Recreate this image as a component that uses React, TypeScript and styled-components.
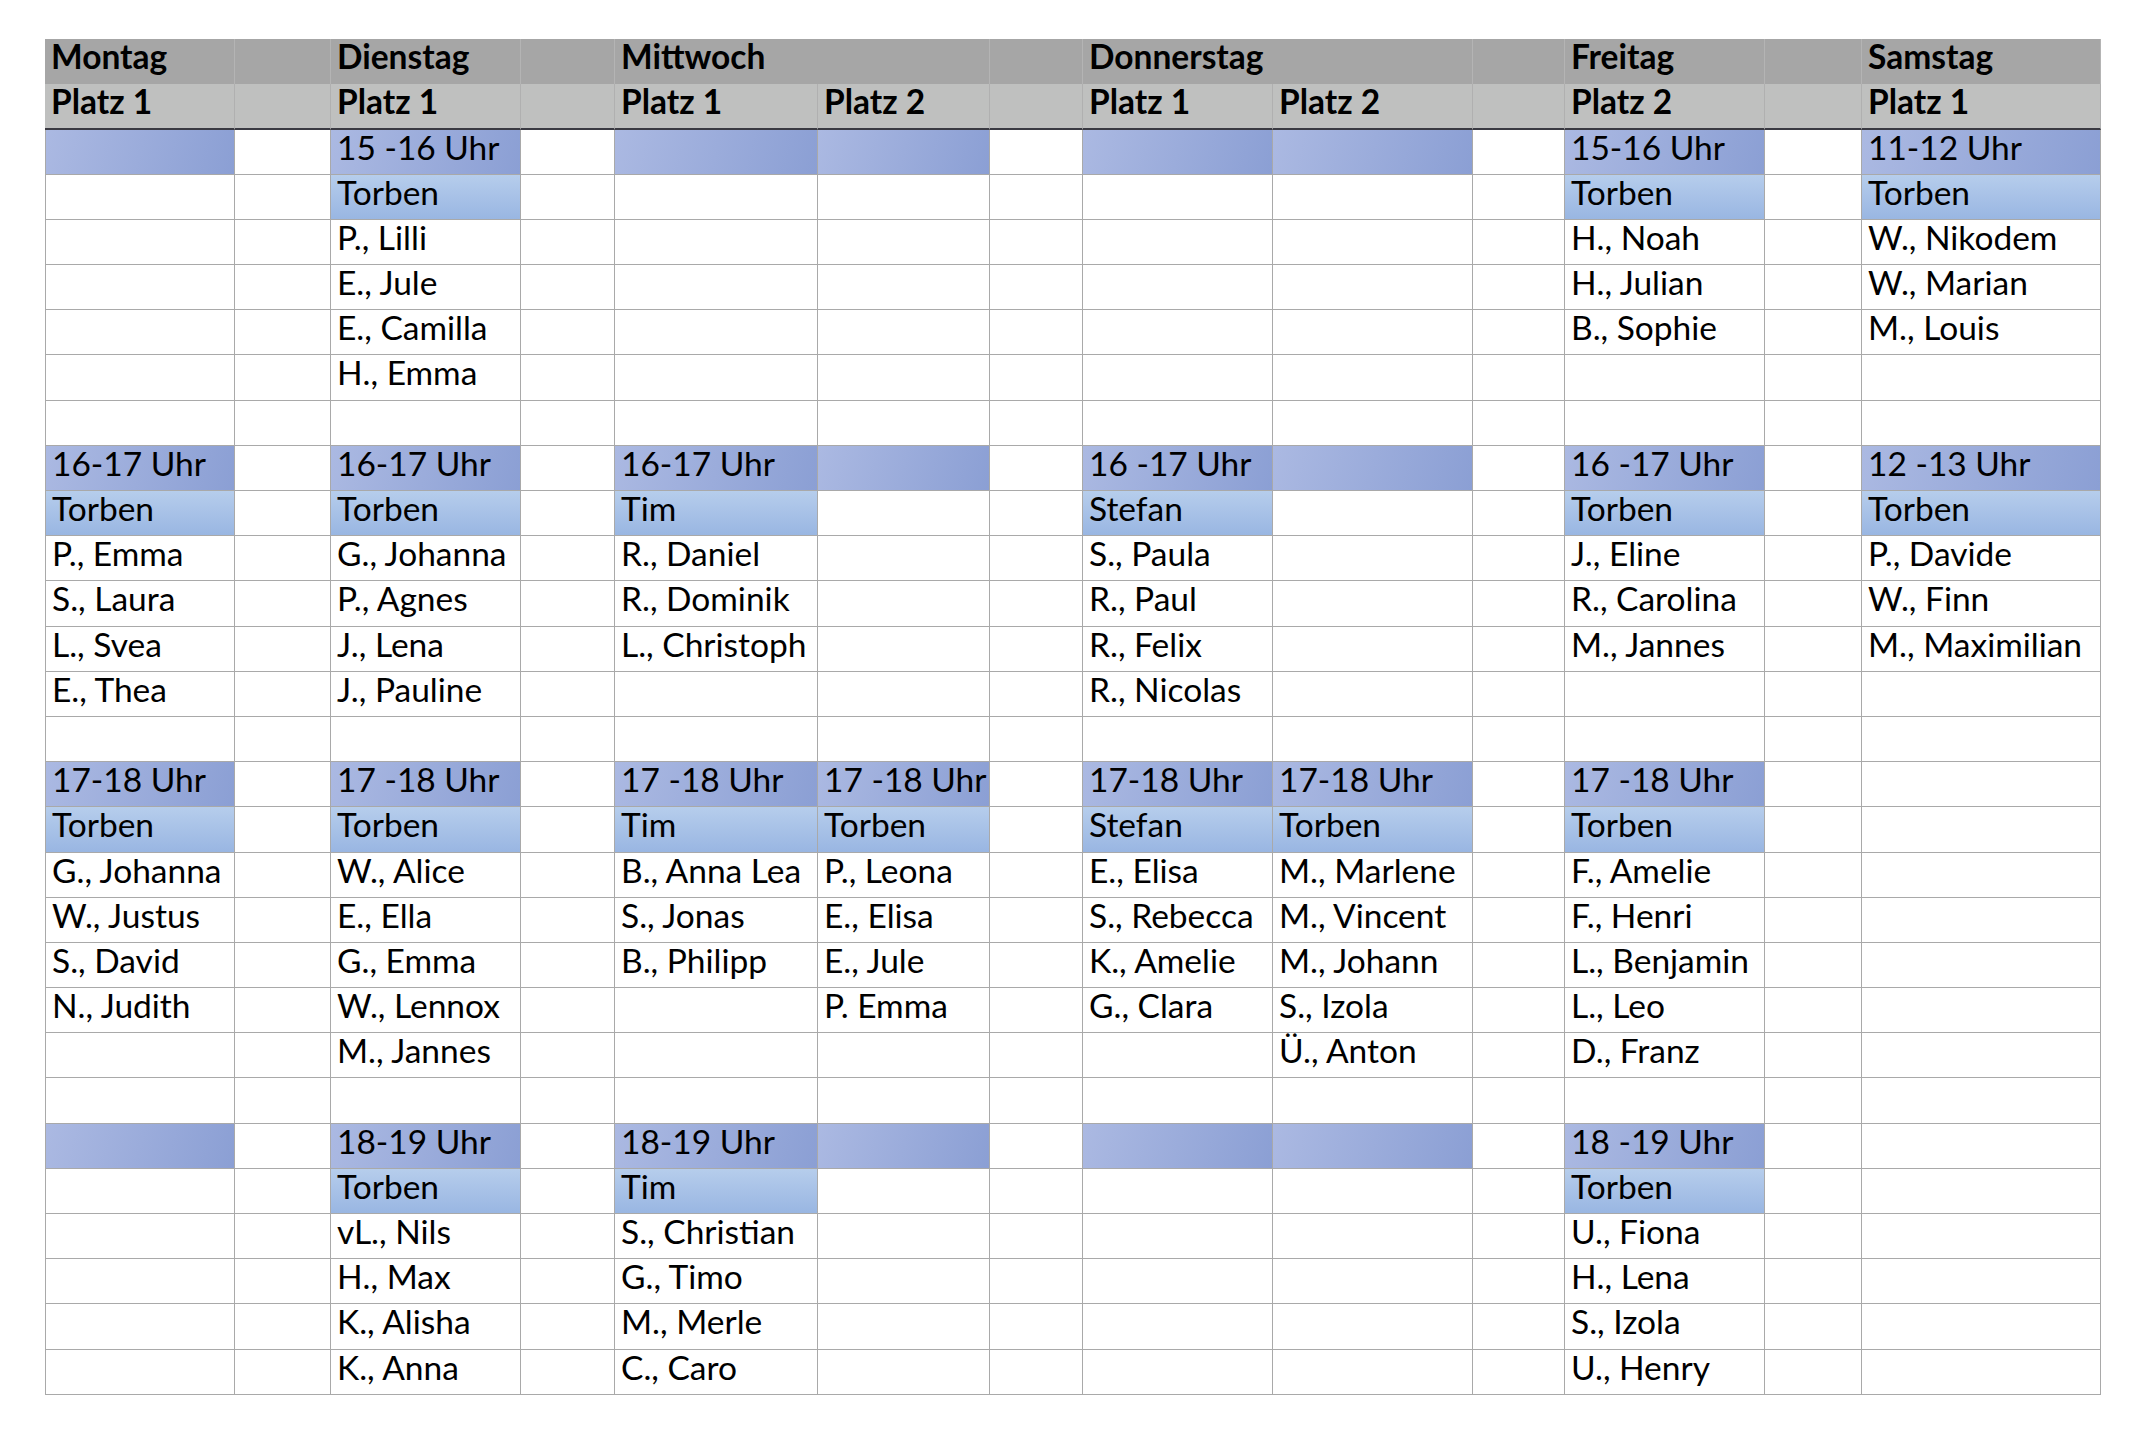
// React library
import React from "react";

// styled-component library for designing components
import styled, { createGlobalStyle, css } from "styled-components";

// -------------------- Data --------------------
type Block = { time?: string; trainer?: string; names?: string[] };
type CellKind = "day" | "place" | "time" | "trainer" | "name";

const COLUMN_WIDTHS = [190, 96, 190, 94, 203, 172, 93, 190, 200, 92, 200, 97, 239];

// rows per block: time, trainer, names ..., blank spacer
const BLOCK_SIZES = [7, 7, 8, 6];

const DAYS: { text: string; span: number }[] = [
  { text: "Montag", span: 1 },
  { text: "", span: 1 },
  { text: "Dienstag", span: 1 },
  { text: "", span: 1 },
  { text: "Mittwoch", span: 2 },
  { text: "", span: 1 },
  { text: "Donnerstag", span: 2 },
  { text: "", span: 1 },
  { text: "Freitag", span: 1 },
  { text: "", span: 1 },
  { text: "Samstag", span: 1 },
];

const PLACES = ["Platz 1", "", "Platz 1", "", "Platz 1", "Platz 2", "", "Platz 1", "Platz 2", "", "Platz 2", "", "Platz 1"];

const SCHEDULE: Record<number, Block[]> = {
  0: [
    { time: "" },
    { time: "16-17 Uhr", trainer: "Torben", names: ["P., Emma", "S., Laura", "L., Svea", "E., Thea"] },
    { time: "17-18 Uhr", trainer: "Torben", names: ["G., Johanna", "W., Justus", "S., David", "N., Judith"] },
    { time: "" },
  ],
  2: [
    { time: "15 -16 Uhr", trainer: "Torben", names: ["P., Lilli", "E., Jule", "E., Camilla", "H., Emma"] },
    { time: "16-17 Uhr", trainer: "Torben", names: ["G., Johanna", "P., Agnes", "J., Lena", "J., Pauline"] },
    { time: "17 -18 Uhr", trainer: "Torben", names: ["W., Alice", "E., Ella", "G., Emma", "W., Lennox", "M., Jannes"] },
    { time: "18-19 Uhr", trainer: "Torben", names: ["vL., Nils", "H., Max", "K., Alisha", "K., Anna"] },
  ],
  4: [
    { time: "" },
    { time: "16-17 Uhr", trainer: "Tim", names: ["R., Daniel", "R., Dominik", "L., Christoph"] },
    { time: "17 -18 Uhr", trainer: "Tim", names: ["B., Anna Lea", "S., Jonas", "B., Philipp"] },
    { time: "18-19 Uhr", trainer: "Tim", names: ["S., Christian", "G., Timo", "M., Merle", "C., Caro"] },
  ],
  5: [
    { time: "" },
    { time: "" },
    { time: "17 -18 Uhr", trainer: "Torben", names: ["P., Leona", "E., Elisa", "E., Jule", "P. Emma"] },
    { time: "" },
  ],
  7: [
    { time: "" },
    { time: "16 -17 Uhr", trainer: "Stefan", names: ["S., Paula", "R., Paul", "R., Felix", "R., Nicolas"] },
    { time: "17-18 Uhr", trainer: "Stefan", names: ["E., Elisa", "S., Rebecca", "K., Amelie", "G., Clara"] },
    { time: "" },
  ],
  8: [
    { time: "" },
    { time: "" },
    { time: "17-18 Uhr", trainer: "Torben", names: ["M., Marlene", "M., Vincent", "M., Johann", "S., Izola", "Ü., Anton"] },
    { time: "" },
  ],
  10: [
    { time: "15-16 Uhr", trainer: "Torben", names: ["H., Noah", "H., Julian", "B., Sophie"] },
    { time: "16 -17 Uhr", trainer: "Torben", names: ["J., Eline", "R., Carolina", "M., Jannes"] },
    { time: "17 -18 Uhr", trainer: "Torben", names: ["F., Amelie", "F., Henri", "L., Benjamin", "L., Leo", "D., Franz"] },
    { time: "18 -19 Uhr", trainer: "Torben", names: ["U., Fiona", "H., Lena", "S., Izola", "U., Henry"] },
  ],
  12: [
    { time: "11-12 Uhr", trainer: "Torben", names: ["W., Nikodem", "W., Marian", "M., Louis"] },
    { time: "12 -13 Uhr", trainer: "Torben", names: ["P., Davide", "W., Finn", "M., Maximilian"] },
    {},
    {},
  ],
};

// -------------------- Custom Style using styled-component --------------------
const GlobalStyle = createGlobalStyle`
  html, body {
    margin: 0;
    padding: 0;
    background: #ffffff;
  }
  body {
    font-family: Lato, "Open Sans", "Liberation Sans", sans-serif;
    color: #000000;
  }
`;

const Page = styled.div`
  width: 2150px;
  height: 1434px;
  box-sizing: border-box;
  padding: 39px 0 0 45px;
`;

const Sheet = styled.div`
  display: grid;
  grid-template-columns: ${COLUMN_WIDTHS.map((w) => `${w}px`).join(" ")};
  grid-template-rows: 45px 45.5px repeat(28, 45.2px);
  width: 2056px;
`;

const kindStyles = {
  day: css`
    background: #a6a6a6;
    font-weight: 700;
    border-right: 1px solid #b4b4b4;
  `,
  place: css`
    background: #bfc0bf;
    font-weight: 700;
    border-right: 1px solid #b0b0b0;
    border-bottom: 2px solid #3a3a42;
  `,
  time: css`
    background: linear-gradient(105deg, #abb9e2 0%, #8b9fd4 100%);
    border-right: 1px solid #a9a9a9;
    border-bottom: 1px solid #a9a9a9;
  `,
  trainer: css`
    background: linear-gradient(180deg, #b6cdec 0%, #99b6e2 100%);
    border-right: 1px solid #a9a9a9;
    border-bottom: 1px solid #a9a9a9;
  `,
  name: css`
    background: #ffffff;
    border-right: 1px solid #a9a9a9;
    border-bottom: 1px solid #a9a9a9;
  `,
};

const Cell = styled.div<{ $kind: CellKind; $span?: number; $first?: boolean }>`
  box-sizing: border-box;
  padding: 0 0 0 6px;
  font-size: 33.5px;
  line-height: 35px;
  white-space: nowrap;
  overflow: visible;
  grid-column: span ${(p) => p.$span ?? 1};
  ${(p) => kindStyles[p.$kind]}
  ${(p) => p.$first && p.$kind !== "day" && p.$kind !== "place" && css`border-left: 1px solid #a9a9a9;`}
`;
// -------------------- Custom Style using styled-component --------------------

// builds the cell of one data column for a given block row
const dataCell = (col: number, blockIndex: number, row: number): { kind: CellKind; text: string } => {
  const block = SCHEDULE[col]?.[blockIndex];
  if (!block) return { kind: "name", text: "" };
  if (row === 0 && block.time !== undefined) return { kind: "time", text: block.time };
  if (row === 1 && block.trainer !== undefined) return { kind: "trainer", text: block.trainer };
  const name = row >= 2 ? block.names?.[row - 2] : undefined;
  return { kind: "name", text: name ?? "" };
};

// JSX function starts from here
const App = (): JSX.Element => {
  const rows: React.ReactNode[] = [];

  BLOCK_SIZES.forEach((size, blockIndex) => {
    for (let row = 0; row < size; row++) {
      COLUMN_WIDTHS.forEach((_, col) => {
        const { kind, text } = dataCell(col, blockIndex, row);
        rows.push(
          <Cell key={`${blockIndex}-${row}-${col}`} $kind={kind} $first={col === 0}>
            {text}
          </Cell>
        );
      });
    }
  });

  return (
    <Page>
      <GlobalStyle />
      <Sheet>
        {DAYS.map((day, index) => (
          <Cell key={`day-${index}`} $kind="day" $span={day.span}>
            {day.text}
          </Cell>
        ))}
        {PLACES.map((place, index) => (
          <Cell key={`place-${index}`} $kind="place">
            {place}
          </Cell>
        ))}
        {rows}
      </Sheet>
    </Page>
  );
};

export default App;
